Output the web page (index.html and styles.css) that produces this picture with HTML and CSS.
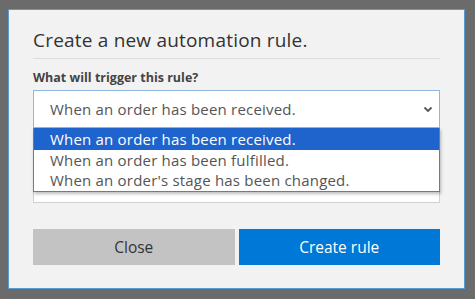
FILE: index.html
```html
<!DOCTYPE html>
<html>
<head>
<meta charset="utf-8">
<link rel="stylesheet" href="styles.css">
</head>
<body>
<div class="modal">
  <h1 class="title">Create a new automation rule.</h1>
  <div class="divider"></div>
  <label class="label">What will trigger this rule?</label>
  <div class="field">
    <div class="select">
      <span>When an order has been received.</span>
      <svg class="chev" width="10" height="7" viewBox="0 0 10 7"><path d="M1.5 1.5 L5 5 L8.5 1.5" fill="none" stroke="#555" stroke-width="1.8"/></svg>
    </div>
    <ul class="options">
      <li class="opt selected">When an order has been received.</li>
      <li class="opt">When an order has been fulfilled.</li>
      <li class="opt">When an order's stage has been changed.</li>
    </ul>
    <div class="box"></div>
  </div>
  <div class="actions">
    <button class="btn close">Close</button>
    <button class="btn create">Create rule</button>
  </div>
</div>
</body>
</html>
```
FILE: styles.css
```css
html, body { margin: 0; padding: 0; }
body {
  background: #6b6b6b;
  width: 475px;
  height: 299px;
  padding: 9px 0 0 8px;
  box-sizing: border-box;
  font-family: "Open Sans", "Noto Sans", sans-serif;
}
.modal {
  width: 457px;
  height: 280px;
  box-sizing: border-box;
  background: #f2f2f2;
  border: 1px solid #5a9ad0;
  padding: 17px 24px 0 24px;
  display: flex;
  flex-direction: column;
}
.title {
  margin: 0;
  font-size: 19px;
  font-weight: 400;
  color: #333;
  line-height: 26px;
  letter-spacing: 0.2px;
}
.divider {
  height: 1px;
  background: #dcdcdc;
  margin-top: 5px;
}
.label {
  margin-top: 11px;
  font-size: 12.5px;
  font-weight: 700;
  color: #444;
  line-height: 16px;
}
.field {
  position: relative;
  margin-top: 4px;
}
.select {
  height: 38px;
  box-sizing: border-box;
  background: #fff;
  border: 1px solid #8fb8e0;
  display: flex;
  align-items: center;
  justify-content: space-between;
  padding: 0 6px 0 16px;
  font-size: 15px;
  letter-spacing: 0.2px;
  color: #555;
}
.chev { margin-top: 1px; }
.options {
  position: absolute;
  left: 0;
  right: 0;
  top: 38px;
  margin: 0;
  padding: 0 0 1px 0;
  list-style: none;
  background: #fff;
  border: 1px solid #7a7a7a;
  border-top: none;
  box-shadow: 1px 2px 3px rgba(0,0,0,0.25);
  z-index: 2;
}
.opt {
  height: 20px;
  line-height: 20px;
  padding-left: 16px;
  font-size: 15px;
  letter-spacing: 0.2px;
  color: #555;
}
.opt.selected {
  height: 22px;
  line-height: 22px;
  background: #1f63cd;
  color: #fff;
}
.box {
  margin-top: 10px;
  height: 65px;
  box-sizing: border-box;
  background: #fff;
  border: 1px solid #d0d0d0;
}
.actions {
  margin-top: 26px;
  display: flex;
  gap: 4px;
}
.btn {
  flex: 1;
  height: 36px;
  border: none;
  font-family: inherit;
  font-size: 15.5px;
  padding: 0;
}
.close { background: #c3c3c3; color: #333; }
.create { background: #0078d7; color: #fff; }
```
